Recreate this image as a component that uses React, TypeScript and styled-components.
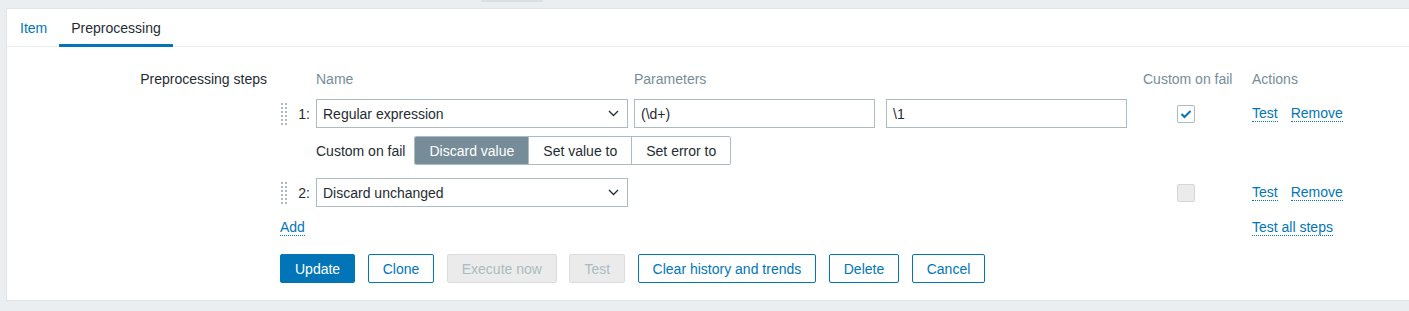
import styled, { createGlobalStyle } from "styled-components";

const GlobalStyle = createGlobalStyle`
  body {
    margin: 0;
    background: #ebeef0;
    font-family: "Liberation Sans", Arial, sans-serif;
    font-size: 14px;
    color: #1f2c33;
  }
`;

const COLUMNS = "36px 318px 509px 109px 1fr";

const TopStrip = styled.div`
  height: 8px;
  display: flex;
`;

const Notch = styled.div`
  margin-left: 481px;
  width: 62px;
  height: 2px;
  background: #dadfe2;
  border-radius: 0 0 3px 3px;
`;

const Panel = styled.div`
  margin-left: 6px;
  background: #fff;
  border: 1px solid #dfe4e7;
  border-right: none;
  padding-bottom: 17px;
`;

const TabBar = styled.div`
  display: flex;
  height: 37px;
  padding-left: 1px;
  border-bottom: 1px solid #ebeef0;
`;

const Tab = styled.div<{ $active?: boolean }>`
  display: flex;
  align-items: center;
  height: 38px;
  box-sizing: border-box;
  padding: 3px 12px 0;
  margin-bottom: -1px;
  color: ${(p) => (p.$active ? "#1f2c33" : "#0275b8")};
  border-bottom: 3px solid ${(p) => (p.$active ? "#0275b8" : "transparent")};
`;

const FormRow = styled.div<{ $top?: number }>`
  display: grid;
  grid-template-columns: 273px 1fr;
  margin-top: ${(p) => p.$top ?? 0}px;
`;

const Label = styled.div`
  text-align: right;
  padding-right: 13px;
  line-height: 24px;
  padding-top: 1px;
`;

const Steps = styled.div`
  display: flex;
  flex-direction: column;
`;

const StepRow = styled.div<{ $top?: number; $height?: number }>`
  display: grid;
  grid-template-columns: ${COLUMNS};
  align-items: center;
  height: ${(p) => p.$height ?? 29}px;
  margin-top: ${(p) => p.$top ?? 0}px;
`;

const HeadCell = styled.div`
  color: #768d99;
  padding-top: 1px;
`;

const NumCell = styled.div`
  display: flex;
  align-items: center;
  justify-content: space-between;
  padding-right: 6px;
`;

const Select = styled.div`
  width: 312px;
  height: 29px;
  box-sizing: border-box;
  border: 1px solid #acbbc2;
  display: flex;
  align-items: center;
  justify-content: space-between;
  padding: 0 8px 0 6px;
`;

const Params = styled.div`
  display: flex;
  gap: 11px;
`;

const Input = styled.div`
  width: 241px;
  height: 29px;
  box-sizing: border-box;
  border: 1px solid #acbbc2;
  display: flex;
  align-items: center;
  padding: 0 6px;
`;

const CheckCell = styled.div`
  padding-left: 34px;
`;

const Checkbox = styled.div<{ $disabled?: boolean }>`
  width: 18px;
  height: 18px;
  box-sizing: border-box;
  border: 1px solid ${(p) => (p.$disabled ? "#d3d8db" : "#acbbc2")};
  border-radius: 2px;
  background: ${(p) => (p.$disabled ? "#ebebeb" : "#fff")};
  display: flex;
  align-items: center;
  justify-content: center;
`;

const Actions = styled.div`
  display: flex;
  gap: 13px;
`;

const LinkText = styled.span`
  color: #0275b8;
  border-bottom: 1px dotted #0275b8;
  line-height: 15px;
  cursor: pointer;
`;

const FailRow = styled.div`
  grid-column: 2 / -1;
  display: flex;
  align-items: center;
  gap: 9px;
`;

const Segments = styled.div`
  display: flex;
  border: 1px solid #acbbc2;
  border-radius: 2px;
  height: 29px;
  box-sizing: border-box;
  overflow: hidden;
`;

const Segment = styled.div<{ $active?: boolean }>`
  display: flex;
  align-items: center;
  padding: 0 14px;
  background: ${(p) => (p.$active ? "#768d99" : "#fff")};
  color: ${(p) => (p.$active ? "#fff" : "#1f2c33")};
  & + & {
    border-left: 1px solid #acbbc2;
  }
`;

const ButtonBar = styled.div`
  display: flex;
  gap: 12.5px;
`;

const Button = styled.button<{ $variant?: "primary" | "outline" | "disabled" }>`
  height: 29px;
  padding: 0 14px;
  font: inherit;
  border-radius: 2px;
  border: 1px solid
    ${(p) => (p.$variant === "disabled" ? "#d8dcdf" : "#0275b8")};
  background: ${(p) =>
    p.$variant === "primary"
      ? "#0275b8"
      : p.$variant === "disabled"
      ? "#ebebeb"
      : "#fff"};
  color: ${(p) =>
    p.$variant === "primary"
      ? "#fff"
      : p.$variant === "disabled"
      ? "#acbbc2"
      : "#0275b8"};
`;

function DragHandle() {
  const dots = [];
  for (let r = 0; r < 6; r++) {
    dots.push(<rect key={`a${r}`} x={1} y={r * 4} width={2} height={2} />);
    dots.push(<rect key={`b${r}`} x={5} y={r * 4} width={2} height={2} />);
  }
  return (
    <svg width="8" height="22" viewBox="0 0 8 22" fill="#acbbc2">
      {dots}
    </svg>
  );
}

function Chevron() {
  return (
    <svg width="11" height="7" viewBox="0 0 11 7">
      <path d="M1 1l4.5 4.5L10 1" fill="none" stroke="#1f2c33" strokeWidth="1.3" />
    </svg>
  );
}

function Check() {
  return (
    <svg width="12" height="10" viewBox="0 0 12 10">
      <path d="M1.5 5l3 3L10.5 2" fill="none" stroke="#0275b8" strokeWidth="2" />
    </svg>
  );
}

export default function App() {
  return (
    <>
      <GlobalStyle />
      <TopStrip>
        <Notch />
      </TopStrip>
      <Panel>
        <TabBar>
          <Tab>Item</Tab>
          <Tab $active>Preprocessing</Tab>
        </TabBar>
        <FormRow $top={19}>
          <Label>Preprocessing steps</Label>
          <Steps>
            <StepRow $height={24}>
              <div />
              <HeadCell>Name</HeadCell>
              <HeadCell>Parameters</HeadCell>
              <HeadCell>Custom on fail</HeadCell>
              <HeadCell>Actions</HeadCell>
            </StepRow>
            <StepRow $top={9}>
              <NumCell>
                <DragHandle />
                <span>1:</span>
              </NumCell>
              <Select>
                Regular expression
                <Chevron />
              </Select>
              <Params>
                <Input>(\d+)</Input>
                <Input>\1</Input>
              </Params>
              <CheckCell>
                <Checkbox>
                  <Check />
                </Checkbox>
              </CheckCell>
              <Actions>
                <LinkText>Test</LinkText>
                <LinkText>Remove</LinkText>
              </Actions>
            </StepRow>
            <StepRow $top={8}>
              <FailRow>
                Custom on fail
                <Segments>
                  <Segment $active>Discard value</Segment>
                  <Segment>Set value to</Segment>
                  <Segment>Set error to</Segment>
                </Segments>
              </FailRow>
            </StepRow>
            <StepRow $top={13}>
              <NumCell>
                <DragHandle />
                <span>2:</span>
              </NumCell>
              <Select>
                Discard unchanged
                <Chevron />
              </Select>
              <div />
              <CheckCell>
                <Checkbox $disabled />
              </CheckCell>
              <Actions>
                <LinkText>Test</LinkText>
                <LinkText>Remove</LinkText>
              </Actions>
            </StepRow>
            <StepRow $top={10} $height={20}>
              <div>
                <LinkText>Add</LinkText>
              </div>
              <div />
              <div />
              <div />
              <div>
                <LinkText>Test all steps</LinkText>
              </div>
            </StepRow>
          </Steps>
        </FormRow>
        <FormRow $top={17}>
          <div />
          <ButtonBar>
            <Button $variant="primary">Update</Button>
            <Button $variant="outline">Clone</Button>
            <Button $variant="disabled">Execute now</Button>
            <Button $variant="disabled">Test</Button>
            <Button $variant="outline">Clear history and trends</Button>
            <Button $variant="outline">Delete</Button>
            <Button $variant="outline">Cancel</Button>
          </ButtonBar>
        </FormRow>
      </Panel>
    </>
  );
}
